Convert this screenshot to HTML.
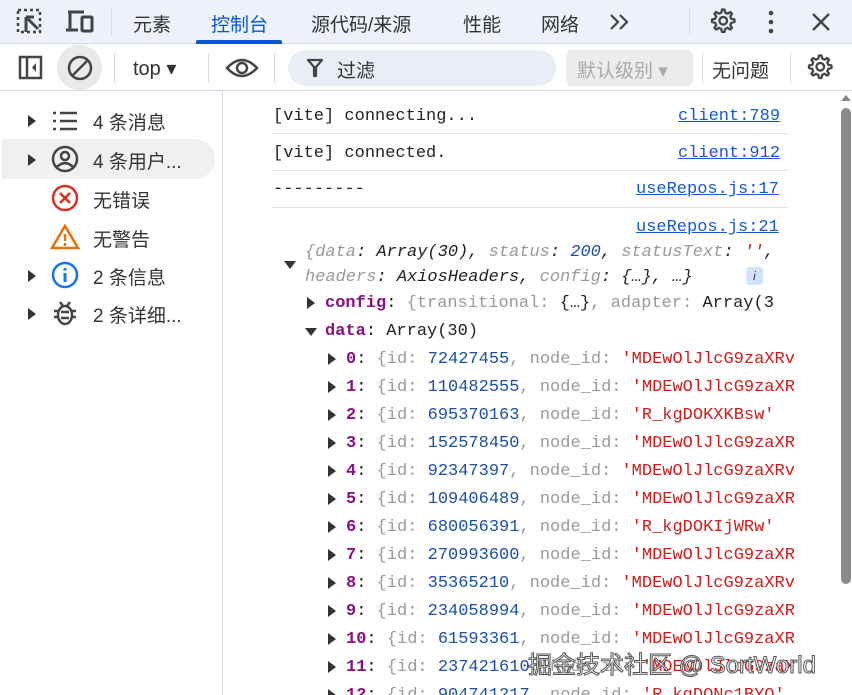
<!DOCTYPE html>
<html><head><meta charset="utf-8"><style>
*{margin:0;padding:0;box-sizing:border-box}
body{width:852px;height:695px;overflow:hidden;background:#fff;font-family:"Liberation Sans","Noto Sans CJK SC",sans-serif;position:relative;color:#1f1f1f}
.a{position:absolute;white-space:nowrap}
.tb1{position:absolute;left:0;top:0;width:852px;height:44px;background:#edf2fa;border-bottom:1px solid #d3dbe6}
.tb2{position:absolute;left:0;top:44px;width:852px;height:47px;background:#fff;border-bottom:1px solid #d3dbe6}
.tab{font-size:19px;top:10px;color:#333}
.sep{position:absolute;width:1px;background:#d3dbe6}
.m{font-family:"Liberation Mono","Noto Sans CJK SC",monospace;font-size:17px}
.g{color:#999}.k{color:#881280}.n{color:#1c4fa8}.s{color:#d01b1b}.d{color:#222}
.tri{position:absolute;width:0;height:0;border-top:6px solid transparent;border-bottom:6px solid transparent;border-left:8px solid #333}
.trd{position:absolute;width:0;height:0;border-left:6px solid transparent;border-right:6px solid transparent;border-top:8px solid #333}
.lnk{color:#1558d6;text-decoration:underline}
.side{font-size:19px;color:#333}
</style></head><body>
<div class="tb1"></div>
<div class="tb2"></div>
<svg width="0" height="0" style="position:absolute"><defs><g id="gear"><path d="M12 1.5 L14.5 1.5 L15.2 4.6 L17.6 5.7 L20.3 4 L22 5.8 L20.3 8.4 L21.3 10.8 L24.5 11.5 L24.5 14 L21.3 14.7 L20.3 17.1 L22 19.8 L20.2 21.6 L17.6 19.8 L15.2 20.9 L14.5 24 L12 24 L11.3 20.9 L8.9 19.8 L6.2 21.6 L4.4 19.8 L6.2 17.1 L5.2 14.7 L2 14 L2 11.5 L5.2 10.8 L6.2 8.4 L4.4 5.8 L6.2 4 L8.9 5.7 L11.3 4.6Z" fill="none" stroke="#444" stroke-width="2.3" stroke-linejoin="round"/><circle cx="13.25" cy="12.75" r="3.8" fill="none" stroke="#444" stroke-width="2.3"/></g></defs></svg>
<!-- toolbar1 icons -->
<svg class="a" style="left:16px;top:8px" width="30" height="28" viewBox="0 0 30 28"><rect x="2" y="2" width="22" height="22" fill="none" stroke="#444" stroke-width="2.5" stroke-dasharray="3 3"/><path d="M10 9 L10 24 M10 9 L22 21 M10 9 L18 9" stroke="#444" stroke-width="3" fill="none"/></svg>
<svg class="a" style="left:64px;top:9px" width="32" height="26" viewBox="0 0 32 26"><path d="M4 3 H20 M6 3 V20 M2 21 H14" stroke="#444" stroke-width="3" fill="none"/><rect x="18" y="8" width="10" height="14" rx="1" fill="none" stroke="#444" stroke-width="3"/></svg>
<div class="sep" style="left:111px;top:8px;height:28px"></div>
<div class="a tab" style="left:133px">元素</div>
<div class="a tab" style="left:211px;color:#0b57d0">控制台</div>
<div class="a" style="left:196px;top:40px;width:86px;height:4px;background:#0b57d0;border-radius:2px 2px 0 0"></div>
<div class="a tab" style="left:311px">源代码/来源</div>
<div class="a tab" style="left:463px">性能</div>
<div class="a tab" style="left:541px">网络</div>
<svg class="a" style="left:608px;top:13px" width="24" height="18" viewBox="0 0 24 18"><path d="M3 2L10 9L3 16M12 2L19 9L12 16" fill="none" stroke="#444" stroke-width="2.2"/></svg>
<div class="sep" style="left:689px;top:8px;height:28px"></div>
<svg class="a" style="left:710px;top:8px" width="27" height="27" viewBox="0 0 27 27"><use href="#gear"/></svg>
<svg class="a" style="left:766px;top:10px" width="10" height="24" viewBox="0 0 10 24"><circle cx="5" cy="3" r="2.3" fill="#444"/><circle cx="5" cy="12" r="2.3" fill="#444"/><circle cx="5" cy="21" r="2.3" fill="#444"/></svg>
<svg class="a" style="left:811px;top:12px" width="20" height="20" viewBox="0 0 20 20"><path d="M2 2L18 18M18 2L2 18" stroke="#444" stroke-width="2.3"/></svg>
<!-- toolbar2 -->
<svg class="a" style="left:18px;top:55px" width="26" height="26" viewBox="0 0 26 26"><rect x="2" y="2" width="21" height="21" fill="none" stroke="#444" stroke-width="2.5"/><path d="M9 2V23" stroke="#444" stroke-width="2.5"/><path d="M18 8 L14 12.5 L18 17Z" fill="#444"/></svg>
<div class="a" style="left:57px;top:45px;width:45px;height:45px;border-radius:50%;background:#e9e9e9"></div>
<svg class="a" style="left:66px;top:54px" width="28" height="28" viewBox="0 0 28 28"><circle cx="14" cy="14" r="11" fill="none" stroke="#444" stroke-width="2.5"/><path d="M7 21 L21 7" stroke="#444" stroke-width="2.5"/></svg>
<div class="sep" style="left:114px;top:53px;height:30px"></div>
<div class="a" style="left:133px;top:56px;font-size:20px;color:#333">top ▾</div>
<div class="sep" style="left:208px;top:53px;height:30px"></div>
<svg class="a" style="left:225px;top:56px" width="34" height="24" viewBox="0 0 34 24"><path d="M2 12 Q17 -4 32 12 Q17 28 2 12Z" fill="none" stroke="#444" stroke-width="2.5"/><circle cx="17" cy="12" r="5" fill="none" stroke="#444" stroke-width="2.5"/></svg>
<div class="sep" style="left:274px;top:53px;height:30px"></div>
<div class="a" style="left:288px;top:50px;width:268px;height:36px;border-radius:18px;background:#e9eef6"></div>
<svg class="a" style="left:306px;top:58px" width="18" height="20" viewBox="0 0 18 20"><path d="M2 2H16L10 9V18L8 18V9Z" fill="none" stroke="#444" stroke-width="2.2" stroke-linejoin="round"/></svg>
<div class="a" style="left:337px;top:56px;font-size:19px;color:#333">过滤</div>
<div class="a" style="left:566px;top:50px;width:127px;height:36px;border-radius:6px;background:#ececec"></div>
<div class="a" style="left:577px;top:56px;font-size:19px;color:#aaa">默认级别 ▾</div>
<div class="sep" style="left:702px;top:53px;height:30px"></div>
<div class="a" style="left:712px;top:56px;font-size:19px;color:#333">无问题</div>
<div class="sep" style="left:790px;top:53px;height:30px"></div>
<svg class="a" style="left:807px;top:54px" width="27" height="27" viewBox="0 0 27 27"><use href="#gear"/></svg>
<!-- sidebar -->
<div class="sep" style="left:222px;top:92px;height:603px"></div>
<div class="a" style="left:2px;top:139px;width:213px;height:40px;background:#f0f0f0;border-radius:0 20px 20px 0"></div>
<div class="tri" style="left:28px;top:115px"></div>
<svg class="a" style="left:52px;top:110px" width="26" height="22" viewBox="0 0 26 22"><path d="M1 3H4M8 3H25M1 11H4M8 11H25M1 19H4M8 19H25" stroke="#444" stroke-width="2.5"/></svg>
<div class="a side" style="left:93px;top:108px">4 条消息</div>
<div class="tri" style="left:28px;top:154px"></div>
<svg class="a" style="left:51px;top:145px" width="28" height="28" viewBox="0 0 28 28"><circle cx="14" cy="14" r="12" fill="none" stroke="#444" stroke-width="2.5"/><circle cx="14" cy="11" r="4" fill="none" stroke="#444" stroke-width="2.5"/><path d="M6 22 Q14 14 22 22" fill="none" stroke="#444" stroke-width="2.5"/></svg>
<div class="a side" style="left:93px;top:147px">4 条用户...</div>
<svg class="a" style="left:51px;top:184px" width="28" height="28" viewBox="0 0 28 28"><circle cx="14" cy="14" r="12" fill="none" stroke="#d93025" stroke-width="2.5"/><path d="M9 9L19 19M19 9L9 19" stroke="#d93025" stroke-width="2.5"/></svg>
<div class="a side" style="left:93px;top:186px">无错误</div>
<svg class="a" style="left:50px;top:223px" width="30" height="28" viewBox="0 0 30 28"><path d="M15 3 L28 25 H2Z" fill="none" stroke="#e8710a" stroke-width="2.5"/><path d="M15 11V18M15 20V23" stroke="#e8710a" stroke-width="2.5"/></svg>
<div class="a side" style="left:93px;top:225px">无警告</div>
<div class="tri" style="left:28px;top:270px"></div>
<svg class="a" style="left:51px;top:261px" width="28" height="28" viewBox="0 0 28 28"><circle cx="14" cy="14" r="12" fill="none" stroke="#1a73e8" stroke-width="2.5"/><path d="M14 12V21M14 7V9.5" stroke="#1a73e8" stroke-width="3"/></svg>
<div class="a side" style="left:93px;top:263px">2 条信息</div>
<div class="tri" style="left:28px;top:308px"></div>
<svg class="a" style="left:52px;top:299px" width="26" height="28" viewBox="0 0 26 28"><ellipse cx="13" cy="16" rx="7" ry="9" fill="none" stroke="#444" stroke-width="2.5"/><path d="M8 3L11 7M18 3L15 7M2 12H6M20 12H24M2 18H6M20 18H24M9 13H17M9 19H17" stroke="#444" stroke-width="2.5"/></svg>
<div class="a side" style="left:93px;top:301px">2 条详细...</div>
<!-- console -->
<div class="a m d" style="left:273px;top:107px">[vite] connecting...</div>
<div class="a m lnk" style="left:678px;top:107px">client:789</div>
<div class="a" style="left:272px;top:133px;width:516px;height:1px;background:#e0e0e0"></div>
<div class="a m d" style="left:273px;top:144px">[vite] connected.</div>
<div class="a m lnk" style="left:678px;top:144px">client:912</div>
<div class="a" style="left:272px;top:170px;width:516px;height:1px;background:#e0e0e0"></div>
<div class="a m d" style="left:273px;top:180px">---------</div>
<div class="a m lnk" style="left:636px;top:180px">useRepos.js:17</div>
<div class="a" style="left:272px;top:207px;width:516px;height:1px;background:#e0e0e0"></div>
<div class="a m lnk" style="left:636px;top:218px">useRepos.js:21</div>
<div class="trd" style="left:284px;top:261px"></div>
<div class="a m" style="left:305px;top:243px;font-style:italic"><span class="g">{data</span><span class="d">: Array(30), </span><span class="g">status</span><span class="d">: </span><span class="n">200</span><span class="d">, </span><span class="g">statusText</span><span class="d">: </span><span class="s">''</span><span class="d">,</span></div>
<div class="a m" style="left:305px;top:268px;font-style:italic"><span class="g">headers</span><span class="d">: AxiosHeaders, </span><span class="g">config</span><span class="d">: {…},  …}</span></div>
<div class="a" style="left:746px;top:267px;width:17px;height:18px;background:#d3e3fd;border-radius:3px;font-size:12px;color:#333;text-align:center;font-style:italic;line-height:18px">i</div>
<div style="position:absolute;left:0;top:0;width:794px;height:695px;overflow:hidden">
<div class="tri" style="left:307px;top:297px"></div>
<div class="a m" style="left:325px;top:294px"><b class="k">config</b><span class="d">: </span><span class="g">{transitional: </span><span class="d">{…}</span><span class="g">, adapter: </span><span class="d">Array(3</span></div>
<div class="trd" style="left:305px;top:328px"></div>
<div class="a m" style="left:325px;top:322px"><b class="k">data</b><span class="d">: Array(30)</span></div>
<div id="rows"></div>
</div>
<script>
var r=[["0","72427455","MDEwOlJlcG9zaXRvcnk"],["1","110482555","MDEwOlJlcG9zaXRvcnk"],["2","695370163","R_kgDOKXKBsw'"],["3","152578450","MDEwOlJlcG9zaXRvcnk"],["4","92347397","MDEwOlJlcG9zaXRvcnk"],["5","109406489","MDEwOlJlcG9zaXRvcnk"],["6","680056391","R_kgDOKIjWRw'"],["7","270993600","MDEwOlJlcG9zaXRvcnk"],["8","35365210","MDEwOlJlcG9zaXRvcnk"],["9","234058994","MDEwOlJlcG9zaXRvcnk"],["10","61593361","MDEwOlJlcG9zaXRvcnk"],["11","237421610","MDEwOlJlcG9zaXRvcnk"],["12","904741217","R_kgDONc1BYQ'"]];
var h="";r.forEach(function(e,i){var y=350+i*28;h+='<div class="tri" style="left:328px;top:'+(y+3)+'px"></div><div class="a m" style="left:346px;top:'+y+'px"><b class="k">'+e[0]+'</b><span class="d">: </span><span class="g">{id: </span><span class="n">'+e[1]+'</span><span class="g">, node_id: </span><span class="s">\''+e[2]+'</span></div>';});
document.getElementById("rows").innerHTML=h;
</script>
<div class="a" style="left:841px;top:95px;width:0;height:0;border-left:5px solid transparent;border-right:5px solid transparent;border-bottom:6px solid #888"></div>
<div class="a" style="left:841px;top:108px;width:10px;height:476px;background:#8a8a8a;border-radius:5px"></div>
<div class="a" style="left:528px;top:645px;font-size:24px;color:#fff;-webkit-text-stroke:1px #555">掘金技术社区 @ SortWorld</div>
</body></html>
